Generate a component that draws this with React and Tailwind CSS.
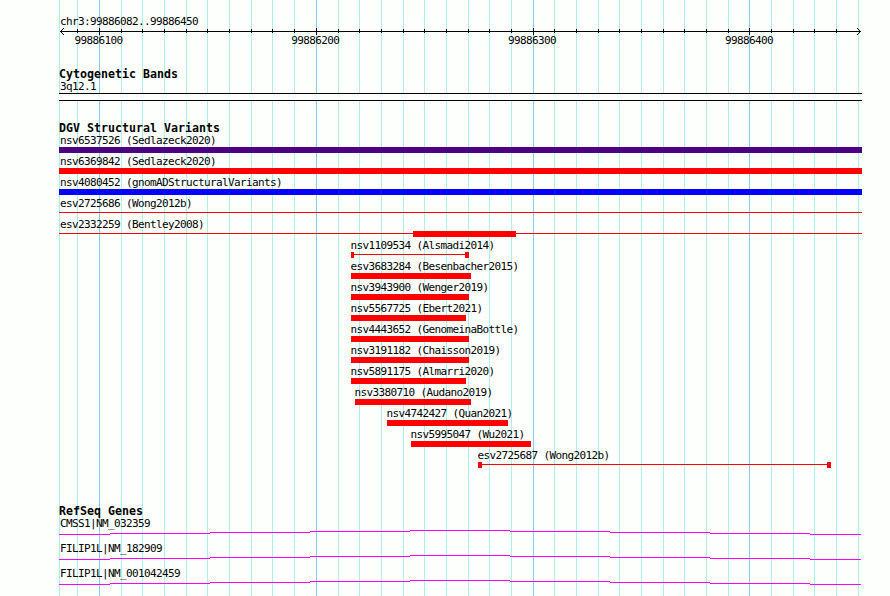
const LEFT = 59;
const WIDTH = 803;

const minorLines = [
  59, 77, 121, 142, 164, 186, 207, 229, 251, 272, 294, 338, 359, 381, 403, 424, 446, 468,
  489, 511, 554, 576, 598, 619, 641, 663, 684, 706, 728, 771, 793, 814, 836, 858,
];

const majorLines = [
  { x: 99, label: '99886100' },
  { x: 316, label: '99886200' },
  { x: 533, label: '99886300' },
  { x: 749, label: '99886400' },
];

// start / end are pixel columns measured from the left edge of the panel
const variants = [
  { id: 'nsv6537526', study: 'Sedlazeck2020', start: 0, end: 803, kind: 'bar', color: 'bg-[#4b0082]' },
  { id: 'nsv6369842', study: 'Sedlazeck2020', start: 0, end: 803, kind: 'bar' },
  { id: 'nsv4080452', study: 'gnomADStructuralVariants', start: 0, end: 803, kind: 'bar', color: 'bg-[#0000ff]' },
  { id: 'esv2725686', study: 'Wong2012b', start: 0, end: 803, kind: 'line' },
  { id: 'esv2332259', study: 'Bentley2008', start: 0, end: 803, kind: 'line', blocks: [[354, 103]] },
  { id: 'nsv1109534', study: 'Alsmadi2014', start: 292, end: 410, kind: 'line', blocks: [[0, 3], [114, 4]] },
  { id: 'esv3683284', study: 'Besenbacher2015', start: 292, end: 412, kind: 'bar' },
  { id: 'nsv3943900', study: 'Wenger2019', start: 292, end: 410, kind: 'bar' },
  { id: 'nsv5567725', study: 'Ebert2021', start: 292, end: 407, kind: 'bar' },
  { id: 'nsv4443652', study: 'GenomeinaBottle', start: 292, end: 410, kind: 'bar' },
  { id: 'nsv3191182', study: 'Chaisson2019', start: 292, end: 410, kind: 'bar' },
  { id: 'nsv5891175', study: 'Almarri2020', start: 292, end: 407, kind: 'bar' },
  { id: 'nsv3380710', study: 'Audano2019', start: 296, end: 412, kind: 'bar' },
  { id: 'nsv4742427', study: 'Quan2021', start: 328, end: 449, kind: 'bar' },
  { id: 'nsv5995047', study: 'Wu2021', start: 352, end: 472, kind: 'bar' },
  { id: 'esv2725687', study: 'Wong2012b', start: 419, end: 772, kind: 'line', blocks: [[0, 4], [349, 4]] },
];

const genes = ['CMSS1|NM_032359', 'FILIP1L|NM_182909', 'FILIP1L|NM_001042459'];

// [x, width, y] of every step of the intron arc
const arcSteps = [
  [0, 51, 4],
  [51, 100, 3],
  [151, 100, 2],
  [251, 100, 1],
  [351, 100, 0],
  [451, 100, 1],
  [551, 100, 2],
  [651, 100, 3],
  [751, 51, 4],
];

function GridLines() {
  return (
    <svg className="absolute inset-0" width="890" height="596" shapeRendering="crispEdges">
      {minorLines.map((x) => (
        <rect key={x} x={x} y="0" width="1" height="596" fill="#afeeee" />
      ))}
      {majorLines.map(({ x }) => (
        <rect key={x} x={x} y="0" width="1" height="596" fill="#87ceeb" />
      ))}
    </svg>
  );
}

function Label({ children }) {
  return (
    <p className="mt-px -mb-px h-3 pl-px text-[11px] leading-3 tracking-[-0.622px] whitespace-pre">{children}</p>
  );
}

function Heading({ children }) {
  return (
    <h2 className="h-3 text-[11.6px] leading-3 font-bold tracking-[0.016px] whitespace-pre">{children}</h2>
  );
}

function Ruler() {
  return (
    <header className="flex h-[53px] flex-col pt-[15px]">
      <Label>chr3:99886082..99886450</Label>
      <svg className="block shrink-0" width={WIDTH} height="8" shapeRendering="crispEdges">
        <rect x="1" y="4" width="801" height="1" />
        {minorLines.slice(1, -1).map((x) => (
          <rect key={x} x={x - LEFT} y="2" width="1" height="4" />
        ))}
        {majorLines.map(({ x }) => (
          <rect key={x} x={x - LEFT} y="1" width="1" height="7" />
        ))}
        <path d="M2 3h1v1h-1zM3 2h1v1h-1zM4 1h1v1h-1zM2 5h1v1h-1zM3 6h1v1h-1zM4 7h1v1h-1z" />
        <path d="M800 3h1v1h-1zM799 2h1v1h-1zM798 1h1v1h-1zM800 5h1v1h-1zM799 6h1v1h-1zM798 7h1v1h-1z" />
      </svg>
      <div className="-mt-px flex pl-[14.5px]">
        {majorLines.map(({ label }) => (
          <div key={label} className="w-[216.8px] shrink-0">
            <Label>{label}</Label>
          </div>
        ))}
      </div>
    </header>
  );
}

function Glyph({ variant }) {
  const { start, end, kind, color = 'bg-[#ff0000]', blocks = [] } = variant;
  if (kind === 'bar') {
    return <div className={`h-1.5 ${color}`} style={{ width: end - start }} />;
  }
  return (
    <svg className="block" width={end - start} height="6" fill="#ff0000" shapeRendering="crispEdges">
      <rect y="2" width={end - start} height="1" />
      {blocks.map(([x, width]) => (
        <rect key={x} x={x} width={width} height="6" />
      ))}
    </svg>
  );
}

function Variant({ variant }) {
  return (
    <li className="flex h-[21px] flex-col" style={{ marginLeft: variant.start }}>
      <div className={variant.start > 0 ? '-ml-[1.5px] flex h-[13px]' : 'flex h-[13px]'}>
        <Label>{`${variant.id} (${variant.study})`}</Label>
      </div>
      <Glyph variant={variant} />
    </li>
  );
}

function Gene({ name }) {
  return (
    <li className="flex h-[25px] flex-col">
      <Label>{name}</Label>
      <svg className="mt-px block shrink-0" width={WIDTH} height="5" fill="#ff00ff" shapeRendering="crispEdges">
        {arcSteps.map(([x, width, y]) => (
          <rect key={x} x={x} y={y} width={width} height="1" />
        ))}
      </svg>
    </li>
  );
}

export default function App() {
  return (
    <div className="relative h-[596px] w-[890px] overflow-hidden bg-[#fdfffc] font-['DejaVu_Sans_Mono',monospace] text-black">
      <GridLines />
      <main className="relative ml-[59px] flex w-[803px] flex-col">
        <Ruler />

        <section className="flex h-[69px] flex-col pt-[15px]">
          <Heading>Cytogenetic Bands</Heading>
          <Label>3q12.1</Label>
          <div className="mt-px h-2 border-y border-black bg-[#fdfffc]" />
        </section>

        <section className="flex h-[383px] flex-col">
          <Heading>DGV Structural Variants</Heading>
          <ul>
            {variants.map((v) => (
              <Variant key={v.id} variant={v} />
            ))}
          </ul>
        </section>

        <section className="flex flex-col">
          <Heading>RefSeq Genes</Heading>
          <ul>
            {genes.map((name) => (
              <Gene key={name} name={name} />
            ))}
          </ul>
        </section>
      </main>
    </div>
  );
}
